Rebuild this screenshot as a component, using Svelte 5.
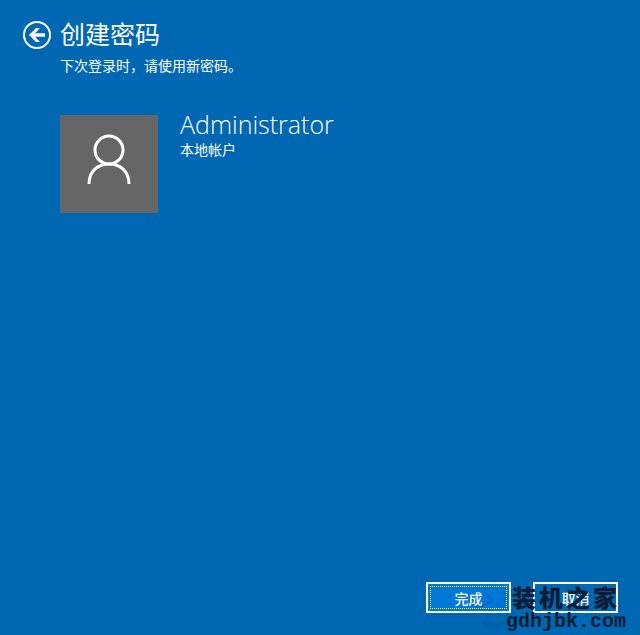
<script lang="ts">
  const account = { name: "Administrator", type: "本地帐户" };
  const mark = ["装", "机", "之", "家"];
</script>

<main class="page">
  <header class="header">
    <button class="back" type="button" aria-label="返回">
      <svg viewBox="0 0 30 30" fill="none" stroke="currentColor">
        <circle cx="15" cy="15" r="13" stroke-width="2"></circle>
        <path d="M23 15H10" stroke-width="3.500"></path>
        <path d="M14 8H18L11.500 15L18 22H14L7 15Z" fill="currentColor" stroke="none"></path>
      </svg>
    </button>
    <div class="heading">
      <h1>创建密码</h1>
      <p>下次登录时，请使用新密码。</p>
    </div>
  </header>

  <section class="account">
    <div class="avatar">
      <svg viewBox="0 0 98 98" fill="none" stroke="currentColor" stroke-width="3">
        <circle cx="49" cy="35" r="14"></circle>
        <path d="M29 69C29 56 38 49 49 49S69 56 69 69"></path>
      </svg>
    </div>
    <div class="details">
      <h2>{account.name}</h2>
      <p>{account.type}</p>
    </div>
  </section>

  <footer class="footer">
    <button class="action primary" type="button"><span>完成</span></button>
    <button class="action" type="button"><span>取消</span></button>
    <div class="watermark">
      <svg viewBox="0 0 40 50" fill="none" stroke="currentColor" stroke-width="3">
        <path d="M20 2L10 12L18 22L4 28L16 32L10 44L24 48L38 38"></path>
        <path d="M20 2L24 12L36 16L24 26L34 30"></path>
      </svg>
      <div class="mark">
        {#each mark as char}
          <span>{char}</span>
        {/each}
      </div>
      <div class="site">gdhjbk.com</div>
    </div>
  </footer>
</main>

<style>
  :global(body) {
    margin: 0;
    background: #0067b3;
  }

  .page {
    box-sizing: border-box;
    display: flex;
    flex-direction: column;
    min-height: 100vh;
    padding: 15px 22px 22px;
    background: #0067b3;
    color: #fff;
    font-family: "Noto Sans CJK SC", sans-serif;
  }

  h1,
  h2,
  p {
    margin: 0;
    font-weight: 400;
  }

  p {
    font-size: 14px;
    line-height: 20px;
  }

  .header {
    display: flex;
    align-items: flex-start;
    gap: 8px;
  }

  .back {
    width: 30px;
    height: 30px;
    margin-top: 5px;
    padding: 0;
    border: none;
    background: none;
    color: inherit;
    cursor: pointer;
  }

  .back svg,
  .avatar svg {
    display: block;
    width: 100%;
    height: 100%;
  }

  h1 {
    font-size: 25px;
    line-height: 36px;
  }

  .heading p {
    margin-top: 4px;
  }

  .account {
    display: flex;
    gap: 22px;
    margin: 40px 0 0 38px;
  }

  .avatar {
    width: 98px;
    height: 98px;
    background: #666;
  }

  .details {
    margin-top: -6px;
  }

  h2 {
    font-family: "Open Sans", "Noto Sans", sans-serif;
    font-size: 25px;
    font-weight: 300;
    line-height: 30px;
  }

  .footer {
    position: relative;
    display: flex;
    justify-content: flex-end;
    gap: 22px;
    margin-top: auto;
  }

  .action {
    box-sizing: border-box;
    display: flex;
    width: 85px;
    height: 31px;
    padding: 2px;
    border: 2px solid #fff;
    background: #0067b3;
    color: #fff;
    font-family: inherit;
    font-size: 14px;
    font-weight: 500;
    line-height: 20px;
    cursor: pointer;
  }

  .action span {
    display: grid;
    flex: 1;
    align-self: stretch;
    place-items: center;
    border: 1px solid transparent;
  }

  .primary {
    background: #0078d7;
  }

  .primary span {
    border: 1px dotted #fff;
  }

  .watermark {
    position: absolute;
    right: -8px;
    bottom: -20px;
    color: #061d35;
    pointer-events: none;
  }

  .watermark svg {
    position: absolute;
    right: 112px;
    bottom: 4px;
    width: 40px;
    height: 50px;
    opacity: 0.08;
  }

  .mark {
    display: flex;
    gap: 3px;
    padding-left: 6px;
    font-size: 24px;
    font-weight: 900;
    line-height: 28px;
  }

  .site {
    font-family: "Liberation Mono", monospace;
    font-size: 20px;
    font-weight: 700;
    line-height: 22px;
  }
</style>
